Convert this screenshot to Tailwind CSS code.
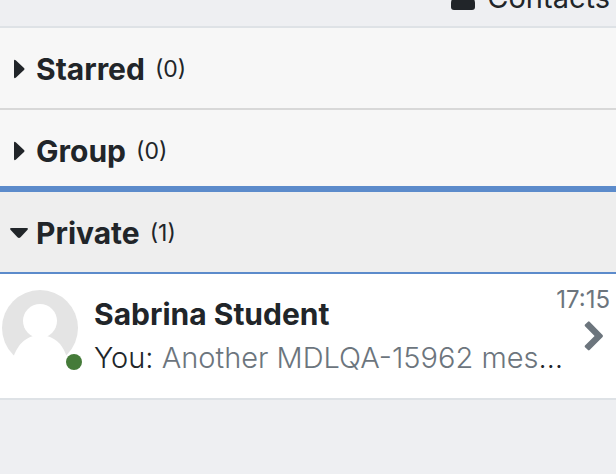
<!DOCTYPE html>
<html lang="en">
<head>
<meta charset="utf-8">
<title>Messages</title>
<script src="https://cdn.jsdelivr.net/npm/@tailwindcss/browser@4"></script>
</head>
<body class="min-h-screen bg-[#eeeff2] font-['Inter','Liberation_Sans',sans-serif] text-[#212529]">
<header class="flex h-7 items-end justify-end overflow-hidden border-b-2 border-[#dee2e6] pr-[6px] pb-3">
  <a href="#" class="flex items-end gap-3 text-[29px] leading-8">
    <svg class="mb-1 h-7 w-6" viewBox="0 0 24 28" fill="currentColor" aria-hidden="true"><circle cx="12" cy="7" r="7"/><path d="M7 14h10a7 7 0 0 1 7 7v4a3 3 0 0 1-3 3H3a3 3 0 0 1-3-3v-4a7 7 0 0 1 7-7z"/></svg>
    <span>Contacts</span>
  </a>
</header>
<main>
  <button type="button" aria-expanded="false" class="flex h-[82px] w-full items-center border-b-2 border-[#d8d8d8] bg-[#f7f7f7] pt-[2px] pl-3 text-left">
    <svg class="mr-2 h-5 w-4" viewBox="0 0 16 20" fill="currentColor" aria-hidden="true"><path d="M2 2Q2 0 4 1.500L12 9Q13.200 10 12 11L4 18.500Q2 20 2 18z"/></svg>
    <span class="text-[30px] leading-10 font-bold">Starred</span>
    <span class="ml-[10px] text-[23px] leading-8">(0)</span>
  </button>
  <button type="button" aria-expanded="false" class="flex h-[76px] w-full items-center bg-[#f7f7f7] pt-[6px] pl-3 text-left">
    <svg class="mr-2 h-5 w-4" viewBox="0 0 16 20" fill="currentColor" aria-hidden="true"><path d="M2 2Q2 0 4 1.500L12 9Q13.200 10 12 11L4 18.500Q2 20 2 18z"/></svg>
    <span class="text-[30px] leading-10 font-bold">Group</span>
    <span class="ml-[10px] text-[23px] leading-8">(0)</span>
  </button>
  <section>
    <button type="button" aria-expanded="true" class="flex h-[88px] w-full items-center border-t-6 border-b-2 border-[#5c8bcb] bg-[#eeeeee] pt-[2px] pl-[10px] text-left">
      <svg class="mr-2 h-5 w-[18px]" viewBox="0 0 18 20" fill="currentColor" aria-hidden="true"><path d="M1.500 5H16.500Q19 5 17.300 7L10.500 14.300Q9 15.800 7.500 14.300L0.700 7Q-1 5 1.500 5z"/></svg>
      <span class="text-[30px] leading-10 font-bold">Private</span>
      <span class="ml-[10px] text-[23px] leading-8">(1)</span>
    </button>
    <a href="#" class="flex items-start border-b-2 border-[#dee2e6] bg-white pr-[6px] pb-[18px] pl-[2px]">
      <span class="relative mt-4 h-20 w-20 shrink-0">
        <svg class="h-20 w-[76px]" viewBox="0 0 76 80" aria-hidden="true"><circle cx="38" cy="38" r="38" fill="#e4e4e4"/><circle cx="38" cy="31" r="17" fill="white"/><path d="M11 68Q17 50 31 46V40H45V46Q60 50 65 68V80H11z" fill="white"/></svg>
        <span class="absolute right-0 bottom-0 h-4 w-4 rounded-full bg-[#457b39]"></span>
      </span>
      <span class="ml-3 min-w-0 flex-1 pt-[18px]">
        <span class="block text-[30px] leading-11 font-bold">Sabrina Student</span>
        <span class="block truncate text-[29px] leading-11 font-light">You: <span class="text-[#6c757d]">Another MDLQA-15962 message</span></span>
      </span>
      <span class="flex w-10 shrink-0 flex-col items-end pt-2 text-[#6c757d]">
        <span class="text-[24px] leading-9 whitespace-nowrap">17:15</span>
        <svg class="mt-[2px] mr-[6px] h-8 w-5" viewBox="0 0 20 32" fill="currentColor" aria-hidden="true"><path d="M1 6.200Q0.200 5.400 1 4.600L4 1.700Q4.800 0.900 5.600 1.700L18.600 15Q19.400 16 18.600 17L5.600 30Q4.800 30.800 4 30L1 27.200Q0.200 26.400 1 25.600L10.600 16z"/></svg>
      </span>
    </a>
  </section>
</main>
</body>
</html>
